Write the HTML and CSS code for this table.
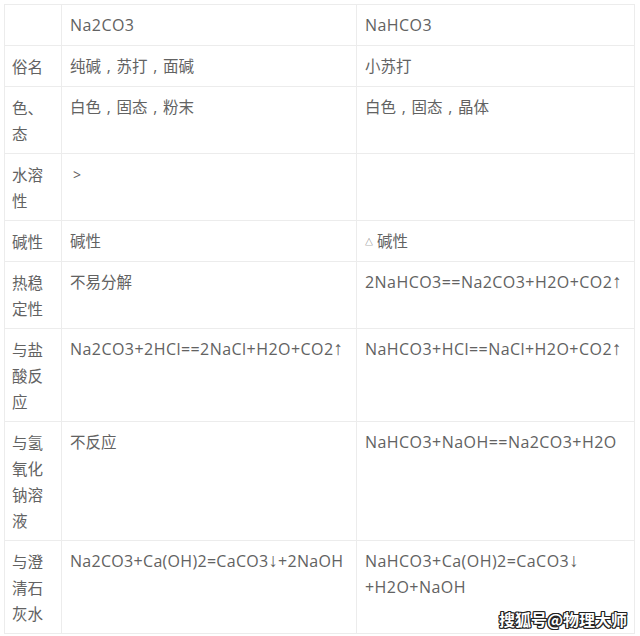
FILE: index.html
```html
<!DOCTYPE html>
<html lang="zh-CN">
<head>
<meta charset="utf-8">
<title>Na2CO3 与 NaHCO3</title>
<link rel="stylesheet" href="styles.css">
</head>
<body>
<div class="page">
<table class="cmp">
  <colgroup>
    <col class="c1"><col class="c2"><col class="c3">
  </colgroup>
  <tr><td class="k"></td><td class="f">Na2CO3</td><td class="f">NaHCO3</td></tr>
  <tr><td class="k">俗名</td><td>纯碱<span class="cm">,</span>苏打<span class="cm">,</span>面碱</td><td>小苏打</td></tr>
  <tr><td class="k">色、态</td><td>白色<span class="cm">,</span>固态<span class="cm">,</span>粉末</td><td>白色<span class="cm">,</span>固态<span class="cm">,</span>晶体</td></tr>
  <tr><td class="k">水溶性</td><td><span class="gt">&gt;</span></td><td></td></tr>
  <tr><td class="k">碱性</td><td>碱性</td><td><span class="tri">△</span>碱性</td></tr>
  <tr><td class="k">热稳定性</td><td>不易分解</td><td class="f">2NaHCO3==Na2CO3+H2O+CO2<span class="ar">↑</span></td></tr>
  <tr><td class="k">与盐酸反应</td><td class="f">Na2CO3+2HCl==2NaCl+H2O+CO2<span class="ar">↑</span></td><td class="f">NaHCO3+HCl==NaCl+H2O+CO2<span class="ar">↑</span></td></tr>
  <tr><td class="k">与氢氧化钠溶液</td><td>不反应</td><td class="f">NaHCO3+NaOH==Na2CO3+H2O</td></tr>
  <tr><td class="k">与澄清石灰水</td><td class="f nw">Na2CO3+Ca(OH)2=CaCO3<span class="ar">↓</span>+2NaOH</td><td class="f">NaHCO3+Ca(OH)2=CaCO3<span class="ar">↓</span><wbr>+H2O+NaOH</td></tr>
</table>
<div class="mark">搜狐号@物理大师</div>
</div>
</body>
</html>
```
FILE: styles.css
```css
html, body {
  margin: 0;
  padding: 0;
  background: #ffffff;
}
.page {
  position: relative;
  width: 640px;
  height: 636px;
  overflow: hidden;
  padding: 4px 0 0 4px;
  box-sizing: border-box;
}
.cmp {
  border-collapse: collapse;
  table-layout: fixed;
  width: 630px;
  font-family: "Open Sans", "Noto Sans CJK SC", sans-serif;
  font-size: 15.5px;
  line-height: 26px;
  color: #626262;
}
.c1 { width: 57px; }
.c2 { width: 295px; }
.c3 { width: 278px; }
.cmp td {
  border: 1px solid #ececec;
  padding: 7px 8px 7px 8px;
  height: 26px;
  vertical-align: top;
  word-break: normal;
  overflow-wrap: break-word;
}
.cmp td.k {
  padding-left: 7px;
  padding-right: 6px;
  font-family: "Noto Sans CJK SC", sans-serif;
}
.cmp td.f {
  font-size: 16px;
  letter-spacing: 0.45px;
}
.cmp td.nw {
  white-space: nowrap;
  letter-spacing: 0.3px;
}
.cm {
  display: inline-block;
  width: 15.5px;
  text-align: center;
  line-height: 1;
}
.ar {
  font-family: "Liberation Sans", sans-serif;
  font-size: 19px;
  line-height: 1;
  letter-spacing: 0;
}
.gt {
  display: inline-block;
  margin-left: 3px;
  font-size: 14px;
  line-height: 1;
}
.tri {
  font-size: 8px;
  line-height: 1;
  margin-right: 4px;
  vertical-align: 2px;
}
.mark {
  position: absolute;
  right: 13px;
  bottom: 5px;
  font-family: "Noto Sans CJK SC", sans-serif;
  font-weight: 700;
  font-size: 16px;
  color: #ffffff;
  text-shadow: 1px 0 0 #222, -1px 0 0 #222, 0 1px 0 #222, 0 -1px 0 #222, 1px 1px 0 #222, -1px -1px 0 #222, 1px -1px 0 #222, -1px 1px 0 #222;
}
```
